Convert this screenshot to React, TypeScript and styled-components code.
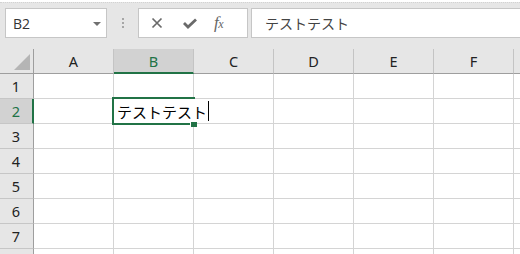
import React from "react";
import styled, { createGlobalStyle } from "styled-components";

const GREEN = "#217346";

const Global = createGlobalStyle`
  html, body { margin: 0; padding: 0; background: #ffffff; overflow: hidden; }
  body { font-family: "Noto Sans", "Noto Sans CJK JP", sans-serif; }
  * { box-sizing: border-box; }
`;

const Page = styled.div`
  width: 520px;
  height: 254px;
  overflow: hidden;
  position: relative;
  background: #ffffff;
`;

const Toolbar = styled.div`
  height: 49px;
  background: #e6e6e6;
  border-top: 1px dotted #d2d2d2;
  margin-top: 2px;
  margin-bottom: -2px;
  padding: 5px 0 0 5px;
  display: flex;
  align-items: flex-start;
`;

const NameBox = styled.div`
  width: 102px;
  height: 30px;
  background: #ffffff;
  border: 1px solid #c6c6c6;
  display: flex;
  align-items: center;
  justify-content: space-between;
  padding: 0 5px 0 7px;
  font-family: "Open Sans", "Noto Sans", sans-serif;
  font-size: 14px;
  color: #333333;
`;

const DropArrow = styled.span`
  width: 0;
  height: 0;
  border-left: 4px solid transparent;
  border-right: 4px solid transparent;
  border-top: 4px solid #707070;
  margin-top: 1px;
`;

const Separator = styled.div`
  width: 31px;
  height: 30px;
  display: flex;
  flex-direction: column;
  align-items: center;
  justify-content: center;
  gap: 2px;
`;

const Dot = styled.span`
  width: 2px;
  height: 2px;
  background: #a6a6a6;
`;

const ButtonBox = styled.div`
  width: 110px;
  height: 30px;
  background: #ffffff;
  border: 1px solid #c6c6c6;
  display: flex;
  align-items: center;
  padding-left: 12px;
`;

const IconSlot = styled.span`
  width: 37px;
  height: 28px;
  display: flex;
  align-items: center;
  justify-content: flex-start;
`;

const Fx = styled.span`
  font-family: "Liberation Serif", serif;
  font-style: italic;
  font-size: 17px;
  color: #666666;
  letter-spacing: -0.5px;
  margin-left: -1px;
  small { font-size: 12px; }
`;

const FormulaBar = styled.div`
  flex: 1;
  height: 30px;
  margin-left: 3px;
  background: #ffffff;
  border: 1px solid #c6c6c6;
  border-right: none;
  display: flex;
  align-items: center;
  padding-left: 13px;
  font-family: "Noto Sans CJK JP", sans-serif;
  font-size: 14px;
  color: #444444;
`;

const Sheet = styled.div`
  display: grid;
  grid-template-columns: 34px repeat(7, 80px);
  grid-auto-rows: 25px;
`;

const Corner = styled.div`
  background: #e6e6e6;
  border-right: 1px solid #9e9e9e;
  border-bottom: 1px solid #9e9e9e;
  position: relative;
  &::after {
    content: "";
    position: absolute;
    right: 3px;
    bottom: 3px;
    width: 0;
    height: 0;
    border-left: 16px solid transparent;
    border-bottom: 16px solid #b5b5b5;
  }
`;

const ColHead = styled.div<{ $sel?: boolean }>`
  background: ${(p) => (p.$sel ? "#d2d2d2" : "#e6e6e6")};
  border-right: 1px solid #c4c4c4;
  border-bottom: ${(p) => (p.$sel ? `2px solid ${GREEN}` : "1px solid #9e9e9e")};
  display: flex;
  align-items: center;
  justify-content: center;
  padding-top: ${(p) => (p.$sel ? "1px" : "0")};
  font-family: "Noto Sans", sans-serif;
  font-size: 14.5px;
  color: ${(p) => (p.$sel ? GREEN : "#222222")};
`;

const RowHead = styled.div<{ $sel?: boolean }>`
  background: ${(p) => (p.$sel ? "#d2d2d2" : "#e6e6e6")};
  border-right: ${(p) => (p.$sel ? `2px solid ${GREEN}` : "1px solid #9e9e9e")};
  border-bottom: 1px solid #c6c6c6;
  display: flex;
  align-items: center;
  justify-content: center;
  padding-right: ${(p) => (p.$sel ? "0" : "1px")};
  font-family: "Noto Sans", sans-serif;
  font-size: 14.5px;
  color: ${(p) => (p.$sel ? GREEN : "#222222")};
`;

const Cell = styled.div`
  background: #ffffff;
  border-right: 1px solid #d4d4d4;
  border-bottom: 1px solid #d4d4d4;
`;

const Selection = styled.div`
  position: absolute;
  left: 112px;
  top: 97px;
  width: 83px;
  height: 28px;
  border: 2px solid ${GREEN};
`;

const Editor = styled.div`
  position: absolute;
  left: 114px;
  top: 99px;
  height: 24px;
  background: #ffffff;
  display: flex;
  align-items: center;
  padding: 0 1px 0 3px;
  font-family: "Noto Sans CJK JP", sans-serif;
  font-size: 15px;
  color: #000000;
  white-space: nowrap;
`;

const Caret = styled.span`
  width: 1px;
  height: 20px;
  background: #000000;
  margin-left: 1px;
`;

const FillHandle = styled.div`
  position: absolute;
  left: 190px;
  top: 121px;
  width: 7px;
  height: 6px;
  background: ${GREEN};
  border-left: 1px solid #ffffff;
  border-top: 1px solid #ffffff;
`;

const cols = ["A", "B", "C", "D", "E", "F", ""];
const rows = [1, 2, 3, 4, 5, 6, 7, 8];

export default function App() {
  return (
    <Page>
      <Global />
      <Toolbar>
        <NameBox>
          <span>B2</span>
          <DropArrow />
        </NameBox>
        <Separator>
          <Dot />
          <Dot />
          <Dot />
        </Separator>
        <ButtonBox>
          <IconSlot>
            <svg width="12" height="12" viewBox="0 0 12 12">
              <path d="M1.5 1.5 L10.5 10.5 M10.5 1.5 L1.5 10.5" stroke="#6a6a6a" strokeWidth="1.7" fill="none" />
            </svg>
          </IconSlot>
          <IconSlot>
            <svg width="14" height="11" viewBox="0 0 14 11">
              <path d="M1 5 L5 9 L13 1.5" stroke="#6a6a6a" strokeWidth="2.8" fill="none" />
            </svg>
          </IconSlot>
          <IconSlot>
            <Fx>
              f<small>x</small>
            </Fx>
          </IconSlot>
        </ButtonBox>
        <FormulaBar>テストテスト</FormulaBar>
      </Toolbar>
      <Sheet>
        <Corner />
        {cols.map((c, i) => (
          <ColHead key={i} $sel={c === "B"}>
            {c}
          </ColHead>
        ))}
        {rows.map((r) => (
          <React.Fragment key={r}>
            <RowHead $sel={r === 2}>{r < 8 ? r : ""}</RowHead>
            {cols.map((_, i) => (
              <Cell key={i} />
            ))}
          </React.Fragment>
        ))}
      </Sheet>
      <Selection />
      <Editor>
        テストテスト
        <Caret />
      </Editor>
      <FillHandle />
    </Page>
  );
}
